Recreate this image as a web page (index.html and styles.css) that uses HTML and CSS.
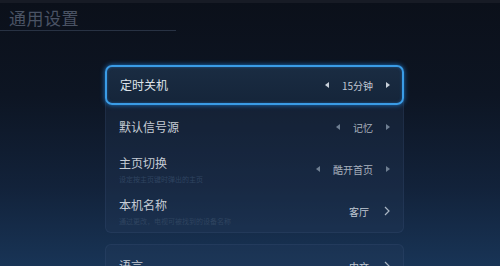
FILE: index.html
```html
<!DOCTYPE html>
<html>
  <head>
    <title>通用设置</title>
    <meta charset="UTF-8" />
    <link rel="stylesheet" href="styles.css">
  </head>
  <body>
    <div class="screen">
      <header>
        <h1>通用设置</h1>
        <div class="line"></div>
      </header>

      <section class="settings">
        <div class="group">
          <div class="row focus">
            <div class="label">定时关机</div>
            <div class="value">
              <span class="tri left"></span>
              <span class="text">15分钟</span>
              <span class="tri right"></span>
            </div>
          </div>
          <div class="row">
            <div class="label">默认信号源</div>
            <div class="value dim">
              <span class="tri left"></span>
              <span class="text">记忆</span>
              <span class="tri right"></span>
            </div>
          </div>
          <div class="row">
            <div class="label">
              主页切换
              <small>设定按主页键时弹出的主页</small>
            </div>
            <div class="value dim">
              <span class="tri left"></span>
              <span class="text">酷开首页</span>
              <span class="tri right"></span>
            </div>
          </div>
          <div class="row">
            <div class="label">
              本机名称
              <small>通过更改，电视可被找到的设备名称</small>
            </div>
            <div class="value">
              <span class="text">客厅</span>
              <svg class="chev" width="6" height="10" viewBox="0 0 6 10"><path d="M1 1 L5 5 L1 9" fill="none" stroke="#aab6c4" stroke-width="1.2"/></svg>
            </div>
          </div>
        </div>

        <div class="group">
          <div class="row">
            <div class="label">语言</div>
            <div class="value">
              <span class="text">中文</span>
              <svg class="chev" width="6" height="10" viewBox="0 0 6 10"><path d="M1 1 L5 5 L1 9" fill="none" stroke="#aab6c4" stroke-width="1.2"/></svg>
            </div>
          </div>
        </div>
      </section>
    </div>
  </body>
</html>
```

FILE: styles.css
```css
html, body {
  margin: 0;
  padding: 0;
}
body {
  font-family: "Noto Sans CJK SC", "Noto Sans", sans-serif;
}
.screen {
  width: 500px;
  height: 266px;
  overflow: hidden;
  background: linear-gradient(to bottom, #0b101a 0%, #0d1523 35%, #12223a 70%, #183456 100%);
  border-top: 3px solid #171b25;
  box-sizing: border-box;
}
header {
  padding: 3px 0 0 0;
}
h1 {
  margin: 0 0 0 9px;
  font-size: 17px;
  line-height: 23px;
  font-weight: 400;
  color: #4a5364;
  letter-spacing: 0.5px;
}
.line {
  width: 176px;
  height: 1px;
  background: #283243;
  margin-top: 1px;
}
.settings {
  margin: 34px 0 0 105px;
  width: 299px;
  display: flex;
  flex-direction: column;
  gap: 11px;
}
.group {
  background: rgba(40, 62, 92, 0.28);
  border: 1px solid rgba(70, 100, 140, 0.18);
  border-radius: 6px;
}
.row {
  height: 42px;
  display: flex;
  align-items: center;
  justify-content: space-between;
  padding: 0 13px 0 13px;
  box-sizing: border-box;
}
.row.focus {
  height: 40px;
  margin: -1px -1px 1px -1px;
  background: linear-gradient(to bottom, #1a2c42, #15253a);
  border: 2px solid #3a9ce6;
  border-radius: 7px;
  box-shadow: 0 0 5px #1c74c4, inset 0 0 3px rgba(40, 130, 220, 0.5);
  padding: 0 12px 0 13px;
}
.label {
  font-size: 12px;
  line-height: 16px;
  color: #c6ccd5;
  display: flex;
  flex-direction: column;
}
.focus .label {
  color: #dfe4ea;
}
.label small {
  font-size: 7px;
  line-height: 10px;
  margin-top: 3px;
  color: #2f4460;
}
.value {
  display: flex;
  align-items: center;
  gap: 13px;
}
.text {
  font-size: 10px;
  color: #c2cad4;
}
.value.dim .text {
  color: #a8b1bd;
}
.tri {
  width: 0;
  height: 0;
  border-top: 3px solid transparent;
  border-bottom: 3px solid transparent;
}
.tri.left {
  border-right: 4px solid #c8d0da;
}
.tri.right {
  border-left: 4px solid #c8d0da;
}
.value.dim .tri.left {
  border-right-color: #6f7f92;
}
.value.dim .tri.right {
  border-left-color: #6f7f92;
}
.chev {
  margin-left: 2px;
}
```
